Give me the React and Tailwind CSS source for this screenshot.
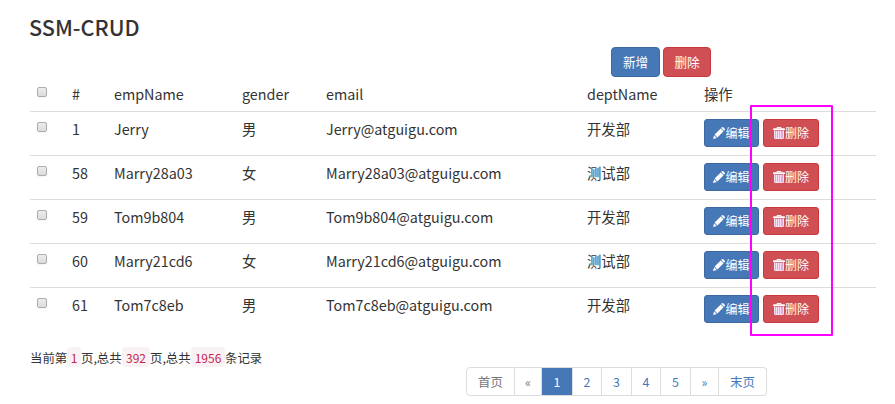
const employees = [
  { id: 1, name: "Jerry", gender: "男", email: "Jerry@atguigu.com", dept: "开发部" },
  { id: 58, name: "Marry28a03", gender: "女", email: "Marry28a03@atguigu.com", dept: "测试部" },
  { id: 59, name: "Tom9b804", gender: "男", email: "Tom9b804@atguigu.com", dept: "开发部" },
  { id: 60, name: "Marry21cd6", gender: "女", email: "Marry21cd6@atguigu.com", dept: "测试部" },
  { id: 61, name: "Tom7c8eb", gender: "男", email: "Tom7c8eb@atguigu.com", dept: "开发部" },
];

const columns = "grid grid-cols-[34px_42px_128px_84px_261px_117px_180px]";

const pages = [
  { label: "首页", style: "w-[49px] rounded-l border-l text-[#777]" },
  { label: "«", style: "w-[27px] text-[#777]" },
  { label: "1", style: "w-[31px] border-[#4678b8] bg-[#4678b8] text-white" },
  { label: "2", style: "w-[29px] text-[#4678b8]" },
  { label: "3", style: "w-[30px] text-[#4678b8]" },
  { label: "4", style: "w-[29px] text-[#4678b8]" },
  { label: "5", style: "w-[30px] text-[#4678b8]" },
  { label: "»", style: "w-[28px] text-[#4678b8]" },
  { label: "末页", style: "w-[48px] rounded-r text-[#4678b8]" },
];

function Checkbox() {
  return (
    <input
      type="checkbox"
      className="ml-[7px] block size-[10px] appearance-none rounded-[2px] border border-[#adadad] bg-linear-to-b from-[#ececec] to-[#dcdcdc] shadow-[0_1px_1px_#0000000d]"
    />
  );
}

function Pencil() {
  return (
    <svg viewBox="0 0 12 12" className="size-3" fill="currentColor">
      <path d="M0 12 1.1 8.2 3.8 10.9ZM1.6 7.6 7.8 1.4 10.6 4.2 4.4 10.4ZM8.3.9 8.9.3Q9.6-.3 10.3.3L11.7 1.7Q12.3 2.4 11.7 3.1L11.1 3.7Z" />
    </svg>
  );
}

function Trash() {
  return (
    <svg viewBox="0 0 12 12" className="size-3" fill="none">
      <path d="M1 3.5h10v7.2q0 1.3-1.2 1.3H2.2Q1 12 1 10.7Z" fill="#e0a9dc" />
      <path d="M4 1.5V.5h4v1" stroke="#fff" />
      <path d="M0 3V2.2Q0 1.2 1 1.2h10q1 0 1 1V3Z" fill="#fff" />
      <path d="M1.5 3.5v7.3q0 .7.7.7h7.6q.7 0 .7-.7V3.5M3.5 4v7M5.5 4v7M7.5 4v7" stroke="#f8e6f4" strokeWidth=".9" />
    </svg>
  );
}

function RowButton({ icon, label, style }) {
  return (
    <button className={`flex h-7 items-center justify-center rounded-[3px] border text-xs leading-none text-white ${style}`}>
      {icon}
      <span>{label}</span>
    </button>
  );
}

function Count({ children, style }) {
  return (
    <code className={`-mt-px flex h-5 items-center justify-center rounded bg-[#f9f2f4] pt-[2px] font-['Noto_Sans_CJK_SC',sans-serif] text-[12px] text-[#c7254e] ${style}`}>
      {children}
    </code>
  );
}

export default function App() {
  return (
    <main className="relative h-[404px] w-[895px] overflow-hidden bg-white pl-[30px] font-['Noto_Sans_CJK_SC',sans-serif] text-[14.35px] text-[#333]">
      <h1 className="-ml-px pt-[13px] text-[21.6px] leading-[28px] font-medium">SSM-CRUD</h1>

      <div className="mt-[6px] ml-[581px] flex gap-[3px] text-[12.6px] leading-none text-white">
        <button className="h-[30px] w-[49px] rounded border border-[#3d69a1] bg-[#4678b8]">新增</button>
        <button className="h-[30px] w-[48px] rounded border border-[#c8393e] bg-[#d04f54]">删除</button>
      </div>

      <div className="w-[846px] leading-5">
        <div className={`${columns} h-[34px] pt-[7px]`}>
          <div className="pt-[3px]"><Checkbox /></div>
          <div className="pl-2">#</div>
          <div className="pl-2">empName</div>
          <div className="pl-2">gender</div>
          <div className="pl-2">email</div>
          <div className="pl-2">deptName</div>
          <div className="pl-2">操作</div>
        </div>
        {employees.map((e) => (
          <div key={e.id} className={`${columns} h-11 border-t border-[#ddd] pt-[7px]`}>
            <div className="pt-[3px]"><Checkbox /></div>
            <div className="pl-2">{e.id}</div>
            <div className="pl-2">{e.name}</div>
            <div className="pl-2">{e.gender}</div>
            <div className="pl-2">{e.email}</div>
            <div className="pl-2">{e.dept}</div>
            <div className="flex gap-1 pl-2">
              <RowButton icon={<Pencil />} label="编辑" style="w-[55px] border-[#3d69a1] bg-[#4678b8]" />
              <RowButton icon={<Trash />} label="删除" style="w-[56px] border-[#c8393e] bg-[#d04f54]" />
            </div>
          </div>
        ))}
      </div>

      <p className="mt-4 flex h-5 items-center pt-px text-[12.4px] leading-5">
        <span className="w-[37px] whitespace-nowrap">当前第</span>
        <Count style="w-[14px]">1</Count>
        <span className="w-[41px] whitespace-nowrap">页,总共</span>
        <Count style="w-[28px]">392</Count>
        <span className="w-[41px] whitespace-nowrap">页,总共</span>
        <Count style="w-[34px]">1956</Count>
        <span className="whitespace-nowrap">条记录</span>
      </p>

      <nav className="ml-[436px] flex h-[29px] text-[12.4px] leading-none">
        {pages.map((p) => (
          <a key={p.label} className={`flex items-center justify-center border-y border-r border-[#ddd] pt-[2px] ${p.style}`}>
            {p.label}
          </a>
        ))}
      </nav>

      <div className="pointer-events-none absolute top-[105px] left-[750px] h-[231px] w-[83px] rounded-[1px] border-2 border-[#ff00ff]" />
    </main>
  );
}
